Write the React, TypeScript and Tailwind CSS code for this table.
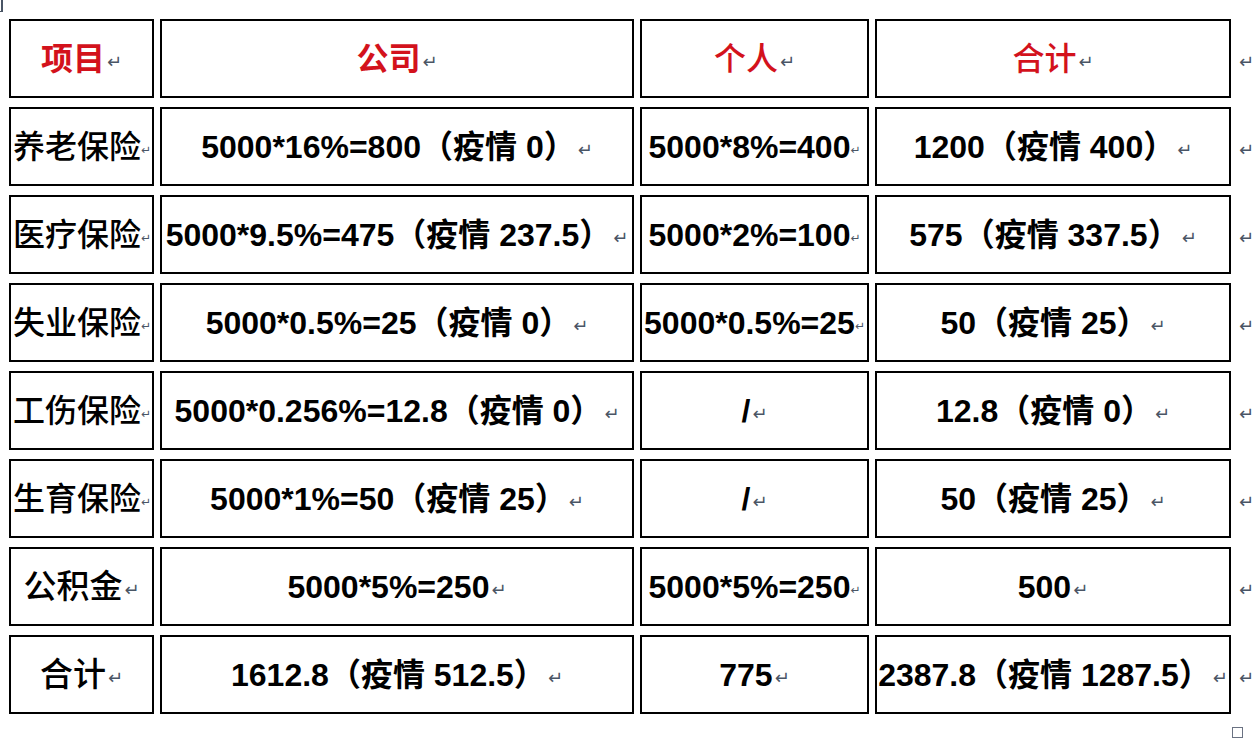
const font = "font-['Liberation_Sans','Noto_Sans_CJK_SC',sans-serif]"

type Row = { label: string; company: string; personal: string; total: string }

const rows: Row[] = [
  { label: "养老保险", company: "5000*16%=800（疫情 0）", personal: "5000*8%=400", total: "1200（疫情 400）" },
  { label: "医疗保险", company: "5000*9.5%=475（疫情 237.5）", personal: "5000*2%=100", total: "575（疫情 337.5）" },
  { label: "失业保险", company: "5000*0.5%=25（疫情 0）", personal: "5000*0.5%=25", total: "50（疫情 25）" },
  { label: "工伤保险", company: "5000*0.256%=12.8（疫情 0）", personal: "/", total: "12.8（疫情 0）" },
  { label: "生育保险", company: "5000*1%=50（疫情 25）", personal: "/", total: "50（疫情 25）" },
  { label: "公积金", company: "5000*5%=250", personal: "5000*5%=250", total: "500" },
  { label: "合计", company: "1612.8（疫情 512.5）", personal: "775", total: "2387.8（疫情 1287.5）" },
]

// Word paragraph mark
function Mark({ small = false }: { small?: boolean }) {
  return (
    <span className={`${small ? "text-[12px] ml-0" : "text-[18px] ml-[2px]"} leading-none text-gray-600 font-['DejaVu_Sans',sans-serif] font-normal self-center translate-y-[3px]`}>↵</span>
  )
}

function Cell({ children, className = "", small = false }: { children: React.ReactNode; className?: string; small?: boolean }) {
  return (
    <div className={`h-[79px] border-2 border-black bg-white flex items-center overflow-hidden whitespace-nowrap ${className}`}>
      {children}
      <Mark small={small} />
    </div>
  )
}

export default function App() {
  return (
    <div className={`w-[1260px] h-[742px] bg-white ${font} overflow-hidden`}>
      <div className="h-[12px] w-[3px] border-r-2 border-b border-gray-600" />
      <div className="mt-[7px] ml-[9px] grid grid-cols-[145px_474px_229px_356px_20px] gap-x-[6px] gap-y-[9px]">
        <Cell className="justify-center text-[32px] font-bold text-[#d3121c]">项目</Cell>
        <Cell className="justify-center text-[32px] font-bold text-[#d3121c]">公司</Cell>
        <Cell className="justify-center text-[32px] font-medium text-[#d3121c]">个人</Cell>
        <Cell className="justify-center text-[32px] font-medium text-[#d3121c]">合计</Cell>
        <div className="flex items-center"><Mark /></div>

        {rows.map((r) => {
          const long = r.label.length === 4
          return (
            <div key={r.label} className="contents">
              <Cell small={long} className={`font-medium text-black ${long ? "text-[32px] justify-start pl-[2px]" : "text-[33px] justify-center"}`}>{r.label}</Cell>
              <Cell className="justify-center text-[32px] font-bold text-black">{r.company}</Cell>
              <Cell small={r.personal.length > 10} className="justify-center text-[32px] font-bold text-black">{r.personal}</Cell>
              <Cell className="justify-center text-[32px] font-bold text-black">{r.total}</Cell>
              <div className="flex items-center"><Mark /></div>
            </div>
          )
        })}
      </div>
      <div className="ml-[1232px] mt-[13px] w-[11px] h-[11px] border border-gray-500" />
    </div>
  )
}
